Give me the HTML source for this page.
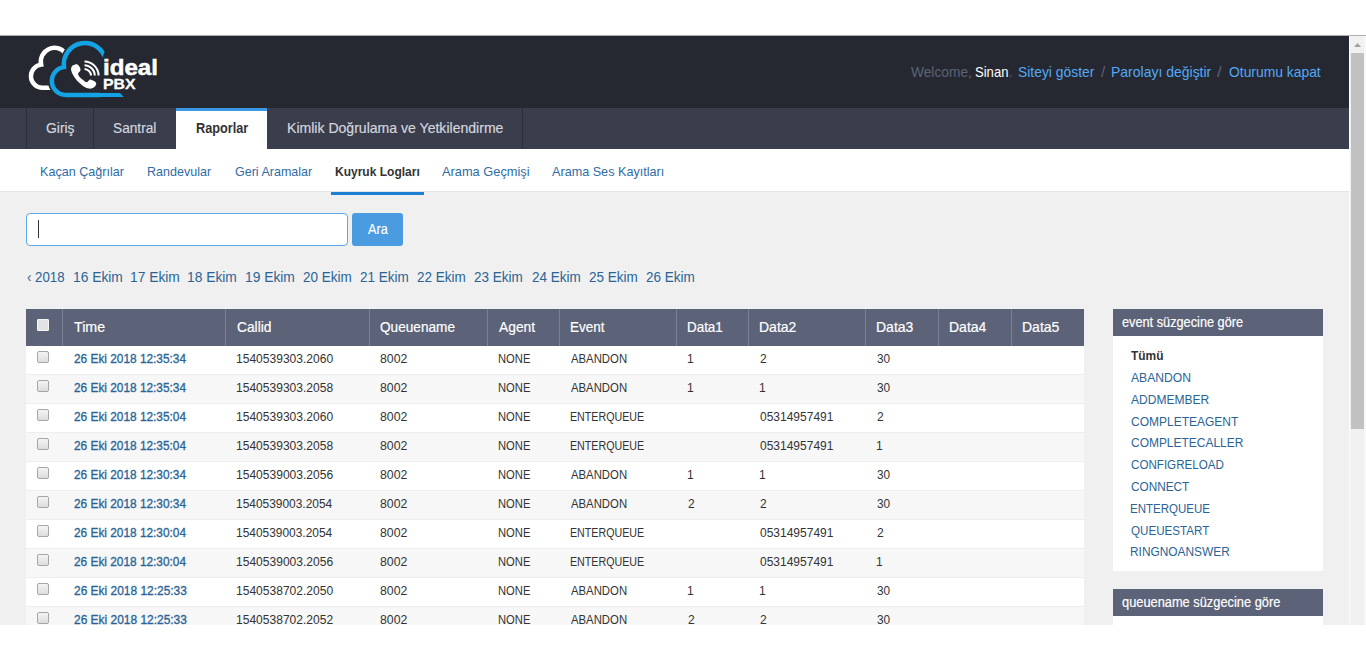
<!DOCTYPE html>
<html lang="tr">
<head>
<meta charset="utf-8">
<title>Kuyruk Logları</title>
<style>
*{box-sizing:border-box;margin:0;padding:0}
html,body{width:1366px;height:660px;overflow:hidden;background:#fff}
body{font-family:"Liberation Sans",sans-serif;font-size:13px;color:#333;position:relative}
#page{position:absolute;left:0;top:36px;width:1349px;height:589px;background:#f0f0f0;overflow:hidden}
#page div{position:absolute}
.t{text-decoration:none;position:absolute;white-space:nowrap;line-height:1;transform-origin:0 0;display:block}
#hdr{left:0;top:0;width:1349px;height:72px;background:#252831}
#nav{left:0;top:72px;width:1349px;height:41px;background:#3a3d4c}
#nav i{position:absolute;top:0;width:1px;height:41px;background:#2b2d39}
#tabon{left:176px;top:72px;width:91px;height:41px;background:#fff;border-top:3px solid #3b99e6}
#sub{left:0;top:113px;width:1349px;height:43px;background:#fff;border-bottom:1px solid #e4e4e4}
#subon{left:331px;top:156px;width:93px;height:3px;background:#1f7fd3}
#q{left:26px;top:177px;width:322px;height:33px;background:#fff;border:1px solid #5ea8e8;border-radius:4px}
#cur{left:38px;top:184px;width:1px;height:18px;background:#333}
#go{left:352px;top:177px;width:51px;height:33px;background:#4a9be0;border-radius:3px}
#th{left:26px;top:273px;width:1058px;height:37px;background:#5c6278}
#th i{position:absolute;top:0;width:1px;height:37px;background:#7b8196}
.r{left:26px;width:1058px;height:29px;background:#fff;border-top:1px solid #eee}
.r.o{background:#f7f7f7}
.cb{left:37px;width:12px;height:12px;border:1px solid #a6a6a6;border-radius:2px;background:linear-gradient(#f4f4f4,#dddddd)}
#cbh{left:37px;top:283px;width:12px;height:12px;background:#e3e3e3;border:1px solid #f6f6f6;border-radius:1px}
.sh{left:1113px;width:210px;height:27px;background:#5c6278}
.sb{left:1113px;width:210px;background:#fff}
#sbar{position:absolute;left:1349px;top:36px;width:17px;height:589px;background:#f1f1f1;border-left:1px solid #fbfbfb;border-right:2px solid #f8f8f8}
#topline{position:absolute;left:0;top:35px;width:1366px;height:1px;background:#adadad}
#sbar u{position:absolute;left:1px;top:17px;width:13px;height:376px;background:#c1c1c1}
#sbar svg{position:absolute;left:0;top:0}
</style>
</head>
<body>
<div id="page">
<div id="hdr"></div>
<div id="nav"><i style="left:26px"></i><i style="left:93px"></i><i style="left:522px"></i></div>
<div id="tabon"></div>
<div id="sub"></div>
<div id="subon"></div>
<div id="q"></div><div id="cur"></div>
<div id="go"></div>
<div id="th"><i style="left:36px"></i><i style="left:199px"></i><i style="left:343px"></i><i style="left:461px"></i><i style="left:533px"></i><i style="left:650px"></i><i style="left:722px"></i><i style="left:839px"></i><i style="left:912px"></i><i style="left:985px"></i></div>
<div id="cbh"></div>
<div class="r" style="top:310px;height:28px;border-top:0"></div><div class="cb" style="top:315px"></div>
<div class="r o" style="top:338px"></div><div class="cb" style="top:344px"></div>
<div class="r" style="top:367px"></div><div class="cb" style="top:373px"></div>
<div class="r o" style="top:396px"></div><div class="cb" style="top:402px"></div>
<div class="r" style="top:425px"></div><div class="cb" style="top:431px"></div>
<div class="r o" style="top:454px"></div><div class="cb" style="top:460px"></div>
<div class="r" style="top:483px"></div><div class="cb" style="top:489px"></div>
<div class="r o" style="top:512px"></div><div class="cb" style="top:518px"></div>
<div class="r" style="top:541px"></div><div class="cb" style="top:547px"></div>
<div class="r o" style="top:570px"></div><div class="cb" style="top:576px"></div>
<div class="sh" style="top:273px"></div>
<div class="sb" style="top:300px;height:235px"></div>
<div class="sh" style="top:553px"></div>
<div class="sb" style="top:580px;height:20px"></div>
<svg class="lg" style="position:absolute;left:0;top:0" width="200" height="72" viewBox="0 36 200 72">
<path d="M65.30,53.07 A13.7,13.7 0 0 0 41.17,64.68 A11.6,11.6 0 0 0 42.50,87.80 L54,87.80" fill="none" stroke="#fff" stroke-width="4.4"/>
<clipPath id="cc" clipPathUnits="userSpaceOnUse"><path d="M0,36 L110.2,36 L98.05,70 L200,70 L200,108 L0,108Z"/></clipPath><g clip-path="url(#cc)"><path d="M105.88,60.62 A21.2,21.2 0 0 0 63.99,67.12 A14.0,14.0 0 0 0 65.80,95.00 L100,95.00" fill="none" stroke="#252831" stroke-width="7.6"/>
<path d="M105.88,60.62 A21.2,21.2 0 0 0 63.99,67.12 A14.0,14.0 0 0 0 65.80,95.00 L100,95.00" fill="none" stroke="#13a3e4" stroke-width="4.5"/></g>
<path d="M99,92.9 L120,92.9 L123.8,97.1 L99,97.1Z" fill="#13a3e4"/>
<path d="M73.09,65.27 C74.00,64.77 75.82,63.91 76.91,64.18 C78.00,64.46 79.05,65.87 79.64,66.91 C80.23,67.96 80.71,69.37 80.46,70.46 C80.20,71.55 78.25,72.37 78.11,73.46 C77.97,74.55 78.75,75.87 79.64,77.00 C80.53,78.14 82.28,79.41 83.46,80.28 C84.64,81.14 85.64,82.32 86.73,82.19 C87.82,82.05 88.87,79.69 90.00,79.46 C91.14,79.23 92.53,80.23 93.55,80.82 C94.57,81.41 95.80,82.19 96.11,83.00 C96.43,83.82 96.11,84.85 95.46,85.73 C94.81,86.61 93.46,87.87 92.19,88.30 C90.91,88.72 89.46,88.77 87.82,88.30 C86.19,87.82 84.19,86.75 82.37,85.46 C80.55,84.17 78.46,82.28 76.91,80.55 C75.37,78.82 74.05,76.82 73.09,75.09 C72.14,73.37 71.46,71.50 71.18,70.18 C70.91,68.87 71.14,68.00 71.46,67.18 C71.77,66.37 72.18,65.77 73.09,65.27Z" fill="#fff"/>
<path d="M84.50,69.00 A6.8,6.8 0 0 1 91.00,75.50" fill="none" stroke="#fff" stroke-width="2.0"/><path d="M84.50,65.20 A10.6,10.6 0 0 1 94.80,75.50" fill="none" stroke="#fff" stroke-width="2.0"/><path d="M84.50,61.40 A14.4,14.4 0 0 1 98.60,75.50" fill="none" stroke="#fff" stroke-width="2.0"/>
</svg>
<span class="t" style="left:910.90px;top:29.00px;font-size:14.4px;color:#5d6377;transform:scaleX(0.9552)">Welcome,</span>
<span class="t" style="left:974.70px;top:29.00px;font-size:14.4px;color:#ffffff;transform:scaleX(0.9076)">Sinan</span>
<span class="t" style="left:1008.95px;top:29.00px;font-size:14.4px;color:#5d6377;transform:scaleX(0.8500)">.</span>
<a class="t" style="left:1018.10px;top:29.00px;font-size:14.4px;color:#54a9f6;transform:scaleX(0.9648)">Siteyi göster</a>
<span class="t" style="left:1100.90px;top:29.00px;font-size:14.4px;color:#5d6377;transform:scaleX(1.0500)">/</span>
<a class="t" style="left:1110.83px;top:29.00px;font-size:14.4px;color:#54a9f6;transform:scaleX(0.9718)">Parolayı değiştir</a>
<span class="t" style="left:1217.10px;top:29.00px;font-size:14.4px;color:#5d6377;transform:scaleX(1.1750)">/</span>
<a class="t" style="left:1228.50px;top:29.00px;font-size:14.4px;color:#54a9f6;transform:scaleX(0.9634)">Oturumu kapat</a>
<span class="t" style="left:46.10px;top:85.00px;font-size:14.8px;color:#d3d5dd;transform:scaleX(0.9396);-webkit-text-stroke:0.2px #d3d5dd">Giriş</span>
<span class="t" style="left:112.80px;top:85.00px;font-size:14.8px;color:#d3d5dd;transform:scaleX(0.9250);-webkit-text-stroke:0.2px #d3d5dd">Santral</span>
<span class="t" style="left:195.50px;top:85.00px;font-size:14.8px;color:#333333;transform:scaleX(0.8594);font-weight:bold">Raporlar</span>
<span class="t" style="left:286.55px;top:85.00px;font-size:14.8px;color:#d3d5dd;transform:scaleX(0.9500);-webkit-text-stroke:0.2px #d3d5dd">Kimlik Doğrulama ve Yetkilendirme</span>
<a class="t" style="left:40.46px;top:129.00px;font-size:13.4px;color:#2f6ca5;transform:scaleX(0.9409)">Kaçan Çağrılar</a>
<a class="t" style="left:146.96px;top:129.00px;font-size:13.4px;color:#2f6ca5;transform:scaleX(0.9364)">Randevular</a>
<a class="t" style="left:234.50px;top:129.00px;font-size:13.4px;color:#2f6ca5;transform:scaleX(0.9347)">Geri Aramalar</a>
<span class="t" style="left:335.40px;top:129.00px;font-size:13.4px;color:#333333;transform:scaleX(0.8969);font-weight:bold">Kuyruk Logları</span>
<a class="t" style="left:442.30px;top:129.00px;font-size:13.4px;color:#2f6ca5;transform:scaleX(0.9569)">Arama Geçmişi</a>
<a class="t" style="left:552.40px;top:129.00px;font-size:13.4px;color:#2f6ca5;transform:scaleX(0.9430)">Arama Ses Kayıtları</a>
<span class="t" style="left:367.60px;top:186.00px;font-size:14.5px;color:#ffffff;transform:scaleX(0.8723);-webkit-text-stroke:0.2px #ffffff">Ara</span>
<a class="t" style="left:27.30px;top:234.00px;font-size:14.5px;color:#2a6496;transform:scaleX(0.9135)">‹ 2018</a>
<a class="t" style="left:72.95px;top:234.00px;font-size:14.5px;color:#2a6496;transform:scaleX(0.9513)">16 Ekim</a>
<a class="t" style="left:130.16px;top:234.00px;font-size:14.5px;color:#2a6496;transform:scaleX(0.9513)">17 Ekim</a>
<a class="t" style="left:187.37px;top:234.00px;font-size:14.5px;color:#2a6496;transform:scaleX(0.9513)">18 Ekim</a>
<a class="t" style="left:244.58px;top:234.00px;font-size:14.5px;color:#2a6496;transform:scaleX(0.9513)">19 Ekim</a>
<a class="t" style="left:302.74px;top:234.00px;font-size:14.5px;color:#2a6496;transform:scaleX(0.9331)">20 Ekim</a>
<a class="t" style="left:359.95px;top:234.00px;font-size:14.5px;color:#2a6496;transform:scaleX(0.9331)">21 Ekim</a>
<a class="t" style="left:417.16px;top:234.00px;font-size:14.5px;color:#2a6496;transform:scaleX(0.9331)">22 Ekim</a>
<a class="t" style="left:474.37px;top:234.00px;font-size:14.5px;color:#2a6496;transform:scaleX(0.9331)">23 Ekim</a>
<a class="t" style="left:531.58px;top:234.00px;font-size:14.5px;color:#2a6496;transform:scaleX(0.9331)">24 Ekim</a>
<a class="t" style="left:588.79px;top:234.00px;font-size:14.5px;color:#2a6496;transform:scaleX(0.9331)">25 Ekim</a>
<a class="t" style="left:646.00px;top:234.00px;font-size:14.5px;color:#2a6496;transform:scaleX(0.9331)">26 Ekim</a>
<span class="t" style="left:73.80px;top:284.00px;font-size:14.5px;color:#ffffff;transform:scaleX(0.9836);-webkit-text-stroke:0.2px #ffffff">Time</span>
<span class="t" style="left:236.50px;top:284.00px;font-size:14.5px;color:#ffffff;transform:scaleX(0.9503);-webkit-text-stroke:0.2px #ffffff">Callid</span>
<span class="t" style="left:380.40px;top:284.00px;font-size:14.5px;color:#ffffff;transform:scaleX(0.9393);-webkit-text-stroke:0.2px #ffffff">Queuename</span>
<span class="t" style="left:498.90px;top:284.00px;font-size:14.5px;color:#ffffff;transform:scaleX(0.9534);-webkit-text-stroke:0.2px #ffffff">Agent</span>
<span class="t" style="left:569.87px;top:284.00px;font-size:14.5px;color:#ffffff;transform:scaleX(0.9320);-webkit-text-stroke:0.2px #ffffff">Event</span>
<span class="t" style="left:686.98px;top:284.00px;font-size:14.5px;color:#ffffff;transform:scaleX(0.9248);-webkit-text-stroke:0.2px #ffffff">Data1</span>
<span class="t" style="left:758.84px;top:284.00px;font-size:14.5px;color:#ffffff;transform:scaleX(0.9647);-webkit-text-stroke:0.2px #ffffff">Data2</span>
<span class="t" style="left:875.84px;top:284.00px;font-size:14.5px;color:#ffffff;transform:scaleX(0.9647);-webkit-text-stroke:0.2px #ffffff">Data3</span>
<span class="t" style="left:948.74px;top:284.00px;font-size:14.5px;color:#ffffff;transform:scaleX(0.9647);-webkit-text-stroke:0.2px #ffffff">Data4</span>
<span class="t" style="left:1021.94px;top:284.00px;font-size:14.5px;color:#ffffff;transform:scaleX(0.9647);-webkit-text-stroke:0.2px #ffffff">Data5</span>
<a class="t" style="left:73.80px;top:316.00px;font-size:13.4px;color:#2a6496;transform:scaleX(0.8850);-webkit-text-stroke:0.35px #2a6496">26 Eki 2018 12:35:34</a>
<span class="t" style="left:236.40px;top:316.00px;font-size:13.4px;color:#333333;transform:scaleX(0.8992)">1540539303.2060</span>
<span class="t" style="left:380.40px;top:316.00px;font-size:13.4px;color:#333333;transform:scaleX(0.9168)">8002</span>
<span class="t" style="left:498.06px;top:316.00px;font-size:13.4px;color:#333333;transform:scaleX(0.8369)">NONE</span>
<span class="t" style="left:570.80px;top:316.00px;font-size:13.4px;color:#333333;transform:scaleX(0.8467)">ABANDON</span>
<span class="t" style="left:687.10px;top:316.00px;font-size:13.4px;color:#333333;transform:scaleX(0.8992)">1</span>
<span class="t" style="left:760.00px;top:316.00px;font-size:13.4px;color:#333333;transform:scaleX(0.8992)">2</span>
<span class="t" style="left:876.80px;top:316.00px;font-size:13.4px;color:#333333;transform:scaleX(0.8791)">30</span>
<a class="t" style="left:73.80px;top:345.00px;font-size:13.4px;color:#2a6496;transform:scaleX(0.8850);-webkit-text-stroke:0.35px #2a6496">26 Eki 2018 12:35:34</a>
<span class="t" style="left:236.40px;top:345.00px;font-size:13.4px;color:#333333;transform:scaleX(0.8992)">1540539303.2058</span>
<span class="t" style="left:380.40px;top:345.00px;font-size:13.4px;color:#333333;transform:scaleX(0.9168)">8002</span>
<span class="t" style="left:498.06px;top:345.00px;font-size:13.4px;color:#333333;transform:scaleX(0.8369)">NONE</span>
<span class="t" style="left:570.80px;top:345.00px;font-size:13.4px;color:#333333;transform:scaleX(0.8467)">ABANDON</span>
<span class="t" style="left:687.10px;top:345.00px;font-size:13.4px;color:#333333;transform:scaleX(0.8992)">1</span>
<span class="t" style="left:759.10px;top:345.00px;font-size:13.4px;color:#333333;transform:scaleX(0.8992)">1</span>
<span class="t" style="left:876.80px;top:345.00px;font-size:13.4px;color:#333333;transform:scaleX(0.8791)">30</span>
<a class="t" style="left:73.80px;top:374.00px;font-size:13.4px;color:#2a6496;transform:scaleX(0.8850);-webkit-text-stroke:0.35px #2a6496">26 Eki 2018 12:35:04</a>
<span class="t" style="left:236.40px;top:374.00px;font-size:13.4px;color:#333333;transform:scaleX(0.8992)">1540539303.2060</span>
<span class="t" style="left:380.40px;top:374.00px;font-size:13.4px;color:#333333;transform:scaleX(0.9168)">8002</span>
<span class="t" style="left:498.06px;top:374.00px;font-size:13.4px;color:#333333;transform:scaleX(0.8369)">NONE</span>
<span class="t" style="left:570.00px;top:374.00px;font-size:13.4px;color:#333333;transform:scaleX(0.7972)">ENTERQUEUE</span>
<span class="t" style="left:760.00px;top:374.00px;font-size:13.4px;color:#333333;transform:scaleX(0.8960)">05314957491</span>
<span class="t" style="left:876.90px;top:374.00px;font-size:13.4px;color:#333333;transform:scaleX(0.8992)">2</span>
<a class="t" style="left:73.80px;top:403.00px;font-size:13.4px;color:#2a6496;transform:scaleX(0.8850);-webkit-text-stroke:0.35px #2a6496">26 Eki 2018 12:35:04</a>
<span class="t" style="left:236.40px;top:403.00px;font-size:13.4px;color:#333333;transform:scaleX(0.8992)">1540539303.2058</span>
<span class="t" style="left:380.40px;top:403.00px;font-size:13.4px;color:#333333;transform:scaleX(0.9168)">8002</span>
<span class="t" style="left:498.06px;top:403.00px;font-size:13.4px;color:#333333;transform:scaleX(0.8369)">NONE</span>
<span class="t" style="left:570.00px;top:403.00px;font-size:13.4px;color:#333333;transform:scaleX(0.7972)">ENTERQUEUE</span>
<span class="t" style="left:760.00px;top:403.00px;font-size:13.4px;color:#333333;transform:scaleX(0.8960)">05314957491</span>
<span class="t" style="left:876.00px;top:403.00px;font-size:13.4px;color:#333333;transform:scaleX(0.8992)">1</span>
<a class="t" style="left:73.80px;top:432.00px;font-size:13.4px;color:#2a6496;transform:scaleX(0.8850);-webkit-text-stroke:0.35px #2a6496">26 Eki 2018 12:30:34</a>
<span class="t" style="left:236.40px;top:432.00px;font-size:13.4px;color:#333333;transform:scaleX(0.8992)">1540539003.2056</span>
<span class="t" style="left:380.40px;top:432.00px;font-size:13.4px;color:#333333;transform:scaleX(0.9168)">8002</span>
<span class="t" style="left:498.06px;top:432.00px;font-size:13.4px;color:#333333;transform:scaleX(0.8369)">NONE</span>
<span class="t" style="left:570.80px;top:432.00px;font-size:13.4px;color:#333333;transform:scaleX(0.8467)">ABANDON</span>
<span class="t" style="left:687.10px;top:432.00px;font-size:13.4px;color:#333333;transform:scaleX(0.8992)">1</span>
<span class="t" style="left:759.10px;top:432.00px;font-size:13.4px;color:#333333;transform:scaleX(0.8992)">1</span>
<span class="t" style="left:876.80px;top:432.00px;font-size:13.4px;color:#333333;transform:scaleX(0.8791)">30</span>
<a class="t" style="left:73.80px;top:461.00px;font-size:13.4px;color:#2a6496;transform:scaleX(0.8850);-webkit-text-stroke:0.35px #2a6496">26 Eki 2018 12:30:34</a>
<span class="t" style="left:236.41px;top:461.00px;font-size:13.4px;color:#333333;transform:scaleX(0.8909)">1540539003.2054</span>
<span class="t" style="left:380.40px;top:461.00px;font-size:13.4px;color:#333333;transform:scaleX(0.9168)">8002</span>
<span class="t" style="left:498.06px;top:461.00px;font-size:13.4px;color:#333333;transform:scaleX(0.8369)">NONE</span>
<span class="t" style="left:570.80px;top:461.00px;font-size:13.4px;color:#333333;transform:scaleX(0.8467)">ABANDON</span>
<span class="t" style="left:688.00px;top:461.00px;font-size:13.4px;color:#333333;transform:scaleX(0.8992)">2</span>
<span class="t" style="left:760.00px;top:461.00px;font-size:13.4px;color:#333333;transform:scaleX(0.8992)">2</span>
<span class="t" style="left:876.80px;top:461.00px;font-size:13.4px;color:#333333;transform:scaleX(0.8791)">30</span>
<a class="t" style="left:73.80px;top:490.00px;font-size:13.4px;color:#2a6496;transform:scaleX(0.8850);-webkit-text-stroke:0.35px #2a6496">26 Eki 2018 12:30:04</a>
<span class="t" style="left:236.41px;top:490.00px;font-size:13.4px;color:#333333;transform:scaleX(0.8909)">1540539003.2054</span>
<span class="t" style="left:380.40px;top:490.00px;font-size:13.4px;color:#333333;transform:scaleX(0.9168)">8002</span>
<span class="t" style="left:498.06px;top:490.00px;font-size:13.4px;color:#333333;transform:scaleX(0.8369)">NONE</span>
<span class="t" style="left:570.00px;top:490.00px;font-size:13.4px;color:#333333;transform:scaleX(0.7972)">ENTERQUEUE</span>
<span class="t" style="left:760.00px;top:490.00px;font-size:13.4px;color:#333333;transform:scaleX(0.8960)">05314957491</span>
<span class="t" style="left:876.90px;top:490.00px;font-size:13.4px;color:#333333;transform:scaleX(0.8992)">2</span>
<a class="t" style="left:73.80px;top:519.00px;font-size:13.4px;color:#2a6496;transform:scaleX(0.8850);-webkit-text-stroke:0.35px #2a6496">26 Eki 2018 12:30:04</a>
<span class="t" style="left:236.40px;top:519.00px;font-size:13.4px;color:#333333;transform:scaleX(0.8992)">1540539003.2056</span>
<span class="t" style="left:380.40px;top:519.00px;font-size:13.4px;color:#333333;transform:scaleX(0.9168)">8002</span>
<span class="t" style="left:498.06px;top:519.00px;font-size:13.4px;color:#333333;transform:scaleX(0.8369)">NONE</span>
<span class="t" style="left:570.00px;top:519.00px;font-size:13.4px;color:#333333;transform:scaleX(0.7972)">ENTERQUEUE</span>
<span class="t" style="left:760.00px;top:519.00px;font-size:13.4px;color:#333333;transform:scaleX(0.8960)">05314957491</span>
<span class="t" style="left:876.00px;top:519.00px;font-size:13.4px;color:#333333;transform:scaleX(0.8992)">1</span>
<a class="t" style="left:73.80px;top:548.00px;font-size:13.4px;color:#2a6496;transform:scaleX(0.8920);-webkit-text-stroke:0.35px #2a6496">26 Eki 2018 12:25:33</a>
<span class="t" style="left:236.40px;top:548.00px;font-size:13.4px;color:#333333;transform:scaleX(0.8992)">1540538702.2050</span>
<span class="t" style="left:380.40px;top:548.00px;font-size:13.4px;color:#333333;transform:scaleX(0.9168)">8002</span>
<span class="t" style="left:498.06px;top:548.00px;font-size:13.4px;color:#333333;transform:scaleX(0.8369)">NONE</span>
<span class="t" style="left:570.80px;top:548.00px;font-size:13.4px;color:#333333;transform:scaleX(0.8467)">ABANDON</span>
<span class="t" style="left:687.10px;top:548.00px;font-size:13.4px;color:#333333;transform:scaleX(0.8992)">1</span>
<span class="t" style="left:759.10px;top:548.00px;font-size:13.4px;color:#333333;transform:scaleX(0.8992)">1</span>
<span class="t" style="left:876.80px;top:548.00px;font-size:13.4px;color:#333333;transform:scaleX(0.8791)">30</span>
<a class="t" style="left:73.80px;top:577.00px;font-size:13.4px;color:#2a6496;transform:scaleX(0.8920);-webkit-text-stroke:0.35px #2a6496">26 Eki 2018 12:25:33</a>
<span class="t" style="left:236.40px;top:577.00px;font-size:13.4px;color:#333333;transform:scaleX(0.8992)">1540538702.2052</span>
<span class="t" style="left:380.40px;top:577.00px;font-size:13.4px;color:#333333;transform:scaleX(0.9168)">8002</span>
<span class="t" style="left:498.06px;top:577.00px;font-size:13.4px;color:#333333;transform:scaleX(0.8369)">NONE</span>
<span class="t" style="left:570.80px;top:577.00px;font-size:13.4px;color:#333333;transform:scaleX(0.8467)">ABANDON</span>
<span class="t" style="left:688.00px;top:577.00px;font-size:13.4px;color:#333333;transform:scaleX(0.8992)">2</span>
<span class="t" style="left:760.00px;top:577.00px;font-size:13.4px;color:#333333;transform:scaleX(0.8992)">2</span>
<span class="t" style="left:876.80px;top:577.00px;font-size:13.4px;color:#333333;transform:scaleX(0.8791)">30</span>
<span class="t" style="left:103.34px;top:20.00px;font-size:22.8px;color:#ffffff;transform:scaleX(1.0561);font-weight:bold;-webkit-text-stroke:0.5px #ffffff">ideal</span>
<span class="t" style="left:102.58px;top:40.00px;font-size:15.5px;color:#ffffff;transform:scaleX(1.0212);font-weight:bold;-webkit-text-stroke:0.3px #ffffff">PBX</span>
<span class="t" style="left:1122.00px;top:280.00px;font-size:13.8px;color:#ffffff;transform:scaleX(0.9233);-webkit-text-stroke:0.2px #ffffff">event süzgecine göre</span>
<span class="t" style="left:1121.60px;top:560.00px;font-size:13.8px;color:#ffffff;transform:scaleX(0.9296);-webkit-text-stroke:0.2px #ffffff">queuename süzgecine göre</span>
<span class="t" style="left:1131.20px;top:313.00px;font-size:13.4px;color:#333333;transform:scaleX(0.8907);font-weight:bold">Tümü</span>
<a class="t" style="left:1131.00px;top:335.00px;font-size:13.4px;color:#2a6496;transform:scaleX(0.9062)">ABANDON</a>
<a class="t" style="left:1131.00px;top:357.00px;font-size:13.4px;color:#2a6496;transform:scaleX(0.8984)">ADDMEMBER</a>
<a class="t" style="left:1131.00px;top:379.00px;font-size:13.4px;color:#2a6496;transform:scaleX(0.8962)">COMPLETEAGENT</a>
<a class="t" style="left:1131.00px;top:400.00px;font-size:13.4px;color:#2a6496;transform:scaleX(0.8930)">COMPLETECALLER</a>
<a class="t" style="left:1131.00px;top:422.00px;font-size:13.4px;color:#2a6496;transform:scaleX(0.8672)">CONFIGRELOAD</a>
<a class="t" style="left:1131.00px;top:444.00px;font-size:13.4px;color:#2a6496;transform:scaleX(0.8799)">CONNECT</a>
<a class="t" style="left:1130.14px;top:466.00px;font-size:13.4px;color:#2a6496;transform:scaleX(0.8602)">ENTERQUEUE</a>
<a class="t" style="left:1131.00px;top:488.00px;font-size:13.4px;color:#2a6496;transform:scaleX(0.8669)">QUEUESTART</a>
<a class="t" style="left:1130.11px;top:509.00px;font-size:13.4px;color:#2a6496;transform:scaleX(0.8884)">RINGNOANSWER</a>
</div>
<div id="topline"></div>
<div id="sbar"><svg width="14" height="14" viewBox="0 0 14 14"><path d="M4,11 L11,11 L7.5,7 Z" fill="#a3a3a3"/></svg><u></u></div>
</body>
</html>
